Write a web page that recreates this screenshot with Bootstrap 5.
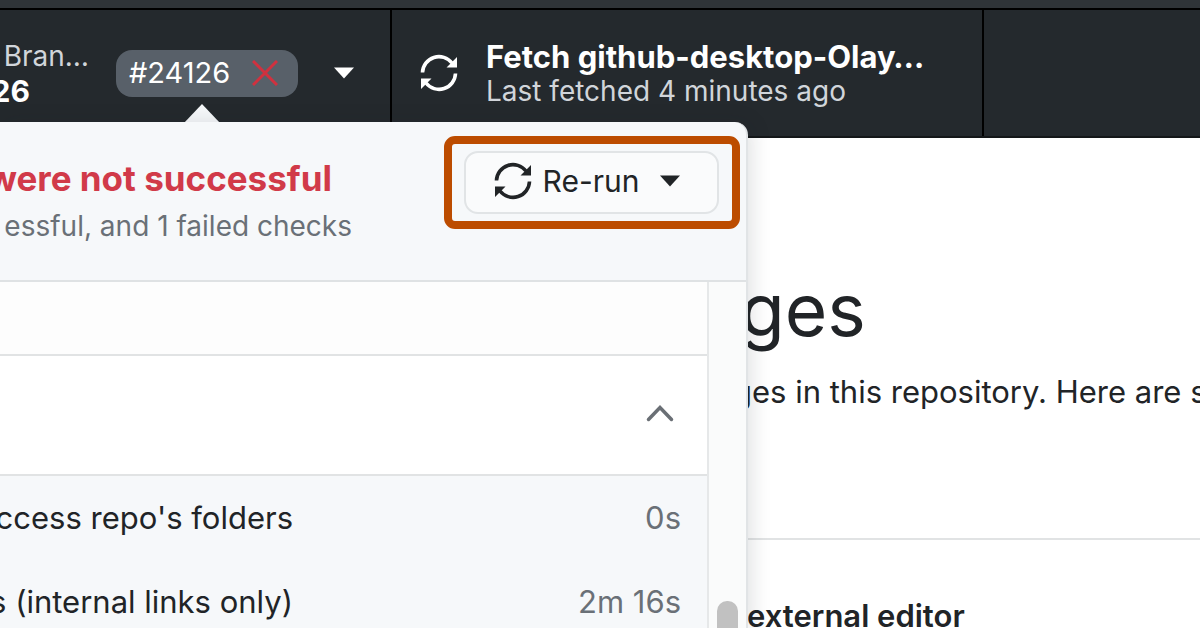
<!DOCTYPE html>
<html lang="en">
<head>
<meta charset="utf-8">
<meta name="viewport" content="width=device-width, initial-scale=1">
<title>GitHub Desktop</title>
<link href="https://cdn.jsdelivr.net/npm/bootstrap@5.3.0/dist/css/bootstrap.min.css" rel="stylesheet">
<style>
  body { font-family: Inter, "Liberation Sans", sans-serif; font-size: 28px; line-height: 36px; color: #212427; background: #fff; }
  .titlebar { height: 10px; background: #2f3438; border-bottom: 2px solid #000; }
  .toolbar { height: 128px; background: #24292d; border-bottom: 2px solid #141719; color: #fff; }
  .toolbar-cell { border-right: 2px solid #000; }
  .branch-cell { width: 392px; }
  .fetch-cell { width: 592px; padding: 0 28px; gap: 28px; }
  .toolbar-text { line-height: 35px; padding-top: 2px; }
  .toolbar-label { color: #d1d5da; }
  .toolbar-value { font-size: 31px; }
  .branch-text { width: 89px; }
  .branch-text .toolbar-value { width: 30px; font-size: 30px; }
  .pr-pill { width: 182px; height: 47px; margin-left: 27px; padding: 0 20px 0 13px; border-radius: 16px; background: #586069; font-size: 29px; }
  .drop-btn { margin-left: 35px; }
  .checks-popover { top: 122px; bottom: 0; left: 0; width: 748px; background: #f6f8fa; border-radius: 0 13px 0 0; border-right: 2px solid #e1e4e6; box-shadow: 4px 0 20px rgba(27,31,35,.13); }
  .popover-tip { top: 104px; left: 184px; width: 36px; height: 19px; background: #f6f8fa; clip-path: polygon(50% 0, 100% 100%, 0 100%); }
  .popover-head { height: 160px; border-bottom: 2px solid #dfe2e4; padding: 14px 6px 0 0; }
  .summary { width: 352px; padding-top: 20px; }
  .summary h2 { font-size: 35px; line-height: 44px; color: #d13a49; width: 332px; }
  .muted-text { color: #6a7077; }
  .highlight { border: 8px solid #bc4c00; border-radius: 11px; padding: 7px 13px 7px 12px; }
  .rerun-btn { width: 255px; height: 63px; padding: 0 34px 3px 26px; border: 2px solid #e1e4e6; border-radius: 14px; background: #fafbfc; font-size: 30px; line-height: 36px; color: #212427; }
  .rerun-label { margin: 0 20px 0 11px; }
  .blank-row { height: 74px; background: #fdfdfd; border-bottom: 2px solid #e1e3e4; }
  .group-row { height: 120px; background: #fff; border-bottom: 2px solid #e1e3e4; padding: 0 33px 4px 0; }
  .job-row { height: 84px; font-size: 31px; padding-right: 26px; }
  .job-name { width: 293px; }
  .scroll-track { width: 39px; background: #fafbfb; border-left: 2px solid #e6e8e9; padding: 319px 8px 0; }
  .scroll-thumb { height: 80px; border-radius: 10px; background: #c1c1c1; }
  .main-pane { padding-left: 733px; }
  .main-pane h1 { font-size: 73px; line-height: 88px; font-weight: 400; padding: 128px 0 0 7px; }
  .main-pane p { font-size: 31px; line-height: 40px; padding-top: 18px; }
  .suggestion { border-top: 2px solid #e1e3e4; margin-top: 126px; padding: 56px 0 0 14px; }
  .suggestion h3 { font-size: 31px; line-height: 40px; }
</style>
</head>
<body>
<div class="position-relative vh-100 overflow-hidden">
  <div class="titlebar"></div>
  <header class="toolbar d-flex">
    <div class="toolbar-cell branch-cell d-flex align-items-center flex-shrink-0">
      <div class="toolbar-text branch-text d-flex flex-column align-items-start text-nowrap">
        <span class="toolbar-label align-self-end">Bran…</span>
        <strong class="toolbar-value d-flex justify-content-end">26</strong>
      </div>
      <button type="button" class="pr-pill btn d-flex align-items-center justify-content-between text-white border-0">
        <span>#24126</span>
        <svg width="26" height="26" viewBox="0 0 26 26" fill="none" stroke="#d0313f" stroke-width="3" aria-hidden="true"><path d="M1 1 25 25M25 1 1 25"/></svg>
      </button>
      <button type="button" class="drop-btn btn border-0 p-0 d-flex" aria-label="Show branches">
        <svg width="22" height="12" viewBox="0 0 22 12" fill="#fff" aria-hidden="true"><path d="M1 0.500H21L11 11.500Z"/></svg>
      </button>
    </div>
    <div class="toolbar-cell fetch-cell d-flex align-items-center flex-shrink-0">
      <svg class="flex-shrink-0" width="38" height="38" viewBox="0 0 38 38" aria-hidden="true"><g fill="none" stroke="#fff" stroke-width="3.600"><path d="M2.500 18.500A16.500 16.500 0 0 1 32 9"/><path d="M35.500 19.500A16.500 16.500 0 0 1 6 29"/></g><path fill="#fff" d="M37 3V13.500H26.500ZM1 35V24.500H11.500Z"/></svg>
      <div class="toolbar-text d-flex flex-column text-nowrap">
        <strong class="toolbar-value">Fetch github-desktop-Olay…</strong>
        <span class="toolbar-label">Last fetched 4 minutes ago</span>
      </div>
    </div>
  </header>

  <main class="main-pane text-nowrap">
    <h1 class="mb-0">ges</h1>
    <p class="mb-0">ges in this repository. Here are s</p>
    <section class="suggestion"><h3 class="mb-0 fw-semibold">external editor</h3></section>
  </main>

  <div class="popover-tip position-absolute"></div>
  <section class="checks-popover position-absolute d-flex flex-column" aria-label="Check runs">
    <div class="popover-head d-flex justify-content-between align-items-start flex-shrink-0">
      <div class="summary text-nowrap">
        <h2 class="mb-0 fw-bold d-flex justify-content-end">were not successful</h2>
        <div class="muted-text d-flex justify-content-end mt-2">essful, and 1 failed checks</div>
      </div>
      <div class="highlight">
        <button type="button" class="rerun-btn btn d-flex align-items-center justify-content-center">
          <svg class="flex-shrink-0" width="38" height="38" viewBox="0 0 38 38" aria-hidden="true"><g fill="none" stroke="#212427" stroke-width="3.600"><path d="M2.500 18.500A16.500 16.500 0 0 1 32 9"/><path d="M35.500 19.500A16.500 16.500 0 0 1 6 29"/></g><path fill="#212427" d="M37 3V13.500H26.500ZM1 35V24.500H11.500Z"/></svg>
          <span class="rerun-label text-nowrap">Re-run</span>
          <svg class="flex-shrink-0" width="22" height="12" viewBox="0 0 22 12" fill="#212427" aria-hidden="true"><path d="M1 0.500H21L11 11.500Z"/></svg>
        </button>
      </div>
    </div>
    <div class="d-flex flex-grow-1 overflow-hidden">
      <div class="flex-grow-1">
        <div class="blank-row"></div>
        <div class="group-row d-flex align-items-center justify-content-end">
          <button type="button" class="btn border-0 p-0 d-flex" aria-label="Collapse">
            <svg width="28" height="18" viewBox="0 0 28 18" fill="none" stroke="#6a6f75" stroke-width="3.500" stroke-linecap="round" aria-hidden="true"><path d="M2.500 15.500 14 3.500 25.500 15.500"/></svg>
          </button>
        </div>
        <div class="job-row d-flex align-items-center justify-content-between text-nowrap">
          <span class="job-name d-flex justify-content-end">ccess repo's folders</span><span class="muted-text">0s</span>
        </div>
        <div class="job-row d-flex align-items-center justify-content-between text-nowrap">
          <span class="job-name d-flex justify-content-end">s (internal links only)</span><span class="muted-text">2m 16s</span>
        </div>
      </div>
      <div class="scroll-track flex-shrink-0"><div class="scroll-thumb"></div></div>
    </div>
  </section>
</div>
<script src="https://cdn.jsdelivr.net/npm/bootstrap@5.3.0/dist/js/bootstrap.bundle.min.js"></script>
</body>
</html>
